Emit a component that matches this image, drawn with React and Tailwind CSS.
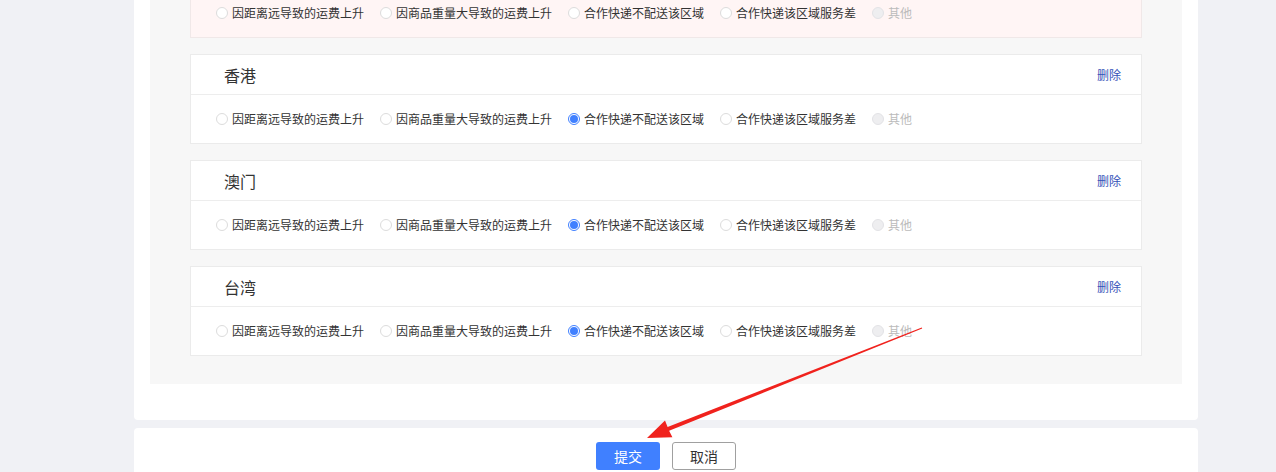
import React from 'react'

const reasons = [
  '因距离远导致的运费上升',
  '因商品重量大导致的运费上升',
  '合作快递不配送该区域',
  '合作快递该区域服务差',
  '其他',
]

const Radio = ({ label, checked, disabled }) => (
  <label className='flex items-center gap-[4px]'>
    {checked ? (
      <span className='w-[12px] h-[12px] rounded-full border border-[#4080ff] flex items-center justify-center'>
        <span className='w-[8px] h-[8px] rounded-full bg-[#4080ff]' />
      </span>
    ) : disabled ? (
      <span className='w-[12px] h-[12px] rounded-full border border-[#e3e3e6] bg-[#eeeef0]' />
    ) : (
      <span className='w-[12px] h-[12px] rounded-full border border-[#dcdcdc] bg-white' />
    )}
    <span className={disabled ? 'text-[#bbbbbb]' : 'text-[#333333]'}>{label}</span>
  </label>
)

const ReasonRow = ({ selected }) => (
  <div className='h-[48px] pl-[25px] flex items-center gap-[16px] text-[12px] leading-none'>
    {reasons.map((r, i) => (
      <Radio key={r} label={r} checked={selected === i} disabled={i === 4} />
    ))}
  </div>
)

const RegionCard = ({ name }) => (
  <div className='bg-white border border-[#ebebeb]'>
    <div className='h-[40px] pl-[33px] pr-[20px] flex items-center justify-between border-b border-[#ededed]'>
      <span className='text-[16px] text-[#333333]'>{name}</span>
      <span className='text-[12px] text-[#3452b8] cursor-pointer'>删除</span>
    </div>
    <ReasonRow selected={2} />
  </div>
)

const Arrow = () => (
  <svg className='absolute left-0 top-0 pointer-events-none' width='1276' height='472'>
    <polygon
      fill='#f0221d'
      points='647,438 665,420.5 667.6,427 921.8,327.5 922.2,328.5 669.1,430.8 672.4,437.3'
    />
  </svg>
)

export default function App() {
  return (
    <div
      className='relative h-[472px] overflow-hidden bg-[#f0f1f5]'
      style={{ fontFamily: '"Noto Sans CJK SC", "Noto Sans", sans-serif' }}
    >
      <div className='ml-[134px] w-[1064px] flex flex-col'>
        <div className='bg-white rounded-b-[4px] px-[16px] pb-[36px]'>
          <div className='bg-[#f7f7f7] px-[40px] pb-[28px]'>
            <div className='-mt-[12px] flex flex-col gap-[16px]'>
              <div className='bg-[#fff5f5] border border-[#f0e8e8]'>
                <ReasonRow selected={-1} />
              </div>
              <RegionCard name='香港' />
              <RegionCard name='澳门' />
              <RegionCard name='台湾' />
            </div>
          </div>
        </div>
        <div className='mt-[8px] bg-white rounded-t-[4px] h-[60px] pt-[14px] flex justify-center gap-[12px]'>
          <button className='w-[64px] h-[28px] rounded-[3px] bg-[#4080ff] text-white text-[14px]'>提交</button>
          <button className='w-[64px] h-[28px] rounded-[3px] border border-[#a0a0a0] bg-white text-[#333333] text-[14px]'>取消</button>
        </div>
      </div>
      <Arrow />
    </div>
  )
}
